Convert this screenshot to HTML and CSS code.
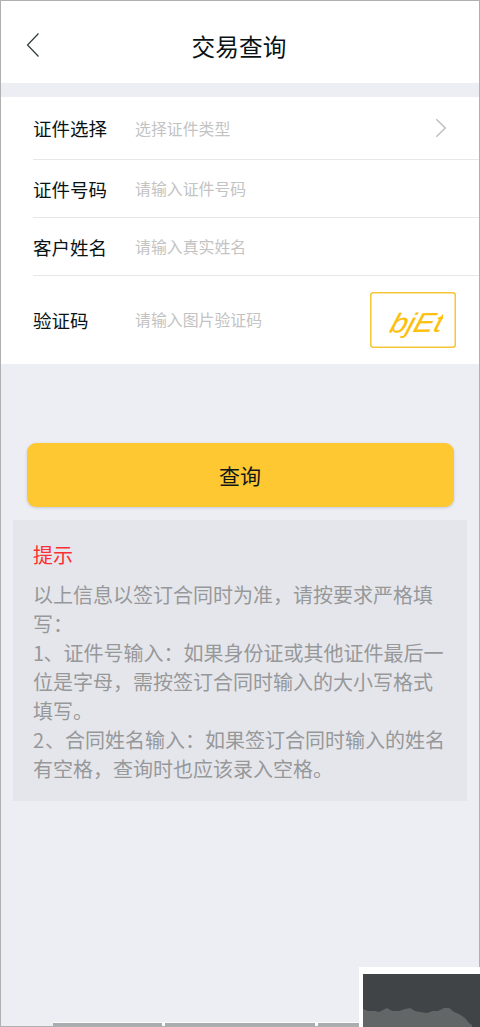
FILE: index.html
```html
<!DOCTYPE html>
<html lang="zh-CN">
<head>
<meta charset="utf-8">
<title>交易查询</title>
<link rel="stylesheet" href="styles.css">
</head>
<body>
<div class="screen">
  <header class="header">
    <svg class="back" viewBox="0 0 14 26" width="14" height="26"><path d="M12.5 1.5 1.5 13l11 11.500"/></svg>
    <h1 class="title">交易查询</h1>
  </header>
  <main>
    <section class="form">
      <div class="row row-type">
        <span class="label">证件选择</span><span class="hint">选择证件类型</span>
        <svg class="chevron" viewBox="0 0 12 20" width="12" height="20"><path d="M1.300 1.300 10.300 10 1.300 18.700"/></svg>
      </div>
      <div class="row"><span class="label">证件号码</span><span class="hint">请输入证件号码</span></div>
      <div class="row"><span class="label">客户姓名</span><span class="hint">请输入真实姓名</span></div>
      <div class="row row-code">
        <span class="label">验证码</span><span class="hint">请输入图片验证码</span>
        <svg class="captcha" viewBox="0 0 86 56" width="86" height="56">
          <defs><clipPath id="code-clip"><rect x="10" y="10" width="63" height="42"/></clipPath></defs>
          <rect class="captcha-frame" x=".75" y=".75" width="84.500" height="54.500" rx="2.500"/>
          <g clip-path="url(#code-clip)"><text class="captcha-text" transform="translate(18.500 40.500) rotate(-1) skewX(-18) scale(1.120 1)">bjEt</text></g>
        </svg>
      </div>
    </section>
    <button class="submit" type="button">查询</button>
    <section class="tips">
      <h2 class="tips-title">提示</h2>
      <p class="tips-text">以上信息以签订合同时为准，请按要求严格填<br>写：<br><span class="num one">1</span>、证件号输入：如果身份证或其他证件最后一<br>位是字母，需按签订合同时输入的大小写格式<br>填写。<br><span class="num two">2</span>、合同姓名输入：如果签订合同时输入的姓名<br>有空格，查询时也应该录入空格。</p>
    </section>
  </main>
  <div class="bottom-bar"><i></i><i></i><i></i></div>
</div>
<svg class="corner" viewBox="0 0 121 60" width="121" height="60">
  <path fill="#fff" d="M0 0h121v60H0z"/>
  <path fill="#404447" d="M4 7h117v53H4z"/>
  <path fill="#636666" d="M4 42l5 2h7l4 1 4-2 4-2 5 3h7l6-2 5-1 5 3 5 1 7 1 6-2h5l6-3h5l5 4 5 2 6 4 4 5 3 2v2H4z"/>
</svg>
</body>
</html>
```
FILE: styles.css
```css
* { box-sizing: border-box; }
body {
  margin: 0;
  position: relative;
  width: 480px;
  height: 1027px;
  overflow: hidden;
  font-family: "Noto Sans CJK SC", sans-serif;
  color: #091314;
}
.screen {
  display: flex;
  flex-direction: column;
  height: 1027px;
  border: 1px solid #b1b0b1;
  background: #edeef4;
}
main { flex: 1; }
.header {
  display: grid;
  grid-template-columns: 59px 1fr 61px;
  align-items: center;
  height: 82px;
  padding-top: 7px;
  background: #fff;
}
.back { margin: -1px 0 0 25px; }
svg { display: block; }
.back path { fill: none; stroke: #303838; stroke-width: 1.2; }
.title {
  margin: 0;
  text-align: center;
  font-size: 23.700px;
  line-height: 36px;
  font-weight: 400;
}
.form {
  margin-top: 14px;
  padding-left: 32px;
  background: #fff;
}
.row {
  display: flex;
  align-items: center;
  height: 58px;
  border-bottom: 1px solid #e7e7e8;
}
.row-type { height: 63px; }
.row-code { height: 88px; border-bottom: 0; padding-bottom: 1px; }
.label { width: 102px; font-size: 18.500px; }
.hint { flex: 1; font-size: 15.900px; color: #c3c3c3; }
.chevron { margin-right: 32px; }
.chevron path { fill: none; stroke: #bcbcc0; stroke-width: 1.4; }
.captcha { margin-right: 23px; }
.captcha-frame { fill: #fff; stroke: #f7c536; stroke-width: 1.5; }
.captcha-text {
  font: italic 27px "Liberation Sans", sans-serif;
  fill: #fdc00c;
  stroke: #fdc00c;
  stroke-width: .2;
}
.submit {
  display: block;
  width: 427px;
  height: 64px;
  margin: 79px 0 0 25.500px;
  padding: 0 0 1px;
  border: 0;
  border-radius: 9px;
  background: #fdc832;
  box-shadow: 0 1px 3px #c4cad8;
  color: #101818;
  font: 400 21px "Noto Sans CJK SC", sans-serif;
}
.tips {
  width: 454px;
  height: 281px;
  margin: 13px 0 0 12px;
  padding: 20px 0 0 20px;
  background: #e5e6eb;
}
.tips-title {
  margin: 0;
  font-size: 20px;
  line-height: 30px;
  font-weight: 400;
  color: #fc3033;
}
.tips-text {
  margin: 10px 0 0;
  font-size: 20px;
  line-height: 29px;
  color: #97989a;
  white-space: nowrap;
}
.num { display: inline-block; }
.one { width: 10.500px; }
.two { width: 12px; }
.bottom-bar {
  display: grid;
  grid-template-columns: 109px 150px 150px;
  gap: 3px;
  height: 4px;
  padding-left: 52px;
  background: linear-gradient(to right, transparent 52px, #fafafa 52px);
}
.bottom-bar i { height: 3px; margin-top: 1px; background: #aaadb0; }
.corner { position: absolute; right: 0; bottom: 0; }
```
